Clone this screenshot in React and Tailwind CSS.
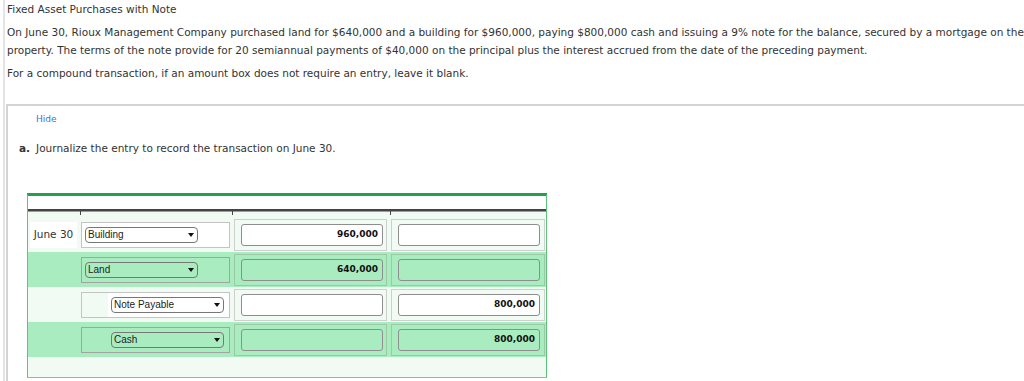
const rows = [
  { date: 'June 30', account: 'Building', debit: '960,000', credit: '', green: false, indent: false },
  { date: '', account: 'Land', debit: '640,000', credit: '', green: true, indent: false },
  { date: '', account: 'Note Payable', debit: '', credit: '800,000', green: false, indent: true },
  { date: '', account: 'Cash', debit: '', credit: '800,000', green: true, indent: true },
];

const Caret = () => (
  <svg width="6" height="4" viewBox="0 0 6 4" className="shrink-0">
    <polygon points="0,0 6,0 3,4" fill="#111" />
  </svg>
);

const AmountBox = ({ value, green, first }) => (
  <div
    className={`h-[32px] border flex items-center pl-[6px] ${first ? 'ml-[2px] w-[153px]' : 'ml-[1px] w-[154px]'} ${
      green ? 'border-[#9cc8a6]' : 'border-[#cfcfcf]'
    }`}
  >
    <div
      className={`h-[22px] w-[142px] rounded-[3px] border border-[#8e8e8e] flex items-center justify-end pr-[4px] font-['DejaVu_Sans',sans-serif] text-[9px] font-bold text-[#111] ${
        green ? 'bg-[#a8ecbf]' : 'bg-white'
      }`}
    >
      {value}
    </div>
  </div>
);

const JournalRow = ({ row }) => (
  <div
    className={`grid grid-cols-[52px_152px_158px_156px] h-[35px] items-center ${
      row.green ? 'bg-[#a8ecbf]' : ''
    }`}
  >
    <div className="flex">
      {row.date && (
        <div className="ml-[2px] w-[47px] h-[26px] bg-white flex items-center justify-center text-[10.5px] text-[#333]">
          {row.date}
        </div>
      )}
    </div>
    <div
      className={`ml-[1px] w-[149px] h-[26px] border flex ${
        row.green ? 'border-[#a3a3a3]' : 'border-[#c4c4c4]'
      }`}
    >
      <div
        className={`flex-1 flex items-center pl-[3px] ${row.indent ? 'ml-[26px]' : ''} ${
          row.green ? '' : 'bg-white'
        }`}
      >
        <div className="w-[113px] h-[16px] rounded-[4px] border border-[#777] flex items-center justify-between pl-[2px] pr-[3px] font-['Liberation_Sans',sans-serif] text-[10px] text-[#222] leading-none">
          <span>{row.account}</span>
          <Caret />
        </div>
      </div>
    </div>
    <AmountBox value={row.debit} green={row.green} first />
    <AmountBox value={row.credit} green={row.green} />
  </div>
);

export default function App() {
  return (
    <div className="h-[381px] overflow-hidden bg-white font-['DejaVu_Sans',sans-serif] text-[#333]">
      <div className="ml-[3px] h-full border-l-2 border-[#e4e4e4] flex flex-col">
        <div className="pl-[2px] mr-[-6px] text-[10.5px] leading-[18px]">
          <p>Fixed Asset Purchases with Note</p>
          <p className="mt-[5px]">
            On June 30, Rioux Management Company purchased land for $640,000 and a building for $960,000, paying
            $800,000 cash and issuing a 9% note for the balance, secured by a mortgage on the property. The terms of
            the note provide for 20 semiannual payments of $40,000 on the principal plus the interest accrued from the
            date of the preceding payment.
          </p>
          <p className="mt-[5px]">For a compound transaction, if an amount box does not require an entry, leave it blank.</p>
        </div>

        <div className="mt-[22px] ml-[1px] flex-1 border-t-2 border-l-2 border-[#d4d4d4]">
          <div className="pt-[6px] pl-[28px] text-[9px] leading-[14px] text-[#3a72d0]">Hide</div>
          <div className="mt-[13px] pl-[11px] text-[10.5px] leading-[18px]">
            <span className="font-bold">a.</span>
            <span className="ml-[6px]">Journalize the entry to record the transaction on June 30.</span>
          </div>

          <div className="mt-[36px] ml-[19px] w-[520px] border-t-[3px] border-t-[#22a14a] border-x border-b border-x-[#5cc47a] border-b-[#72cf8c]">
            <div className="h-[13px] bg-white" />
            <div className="grid grid-cols-[52px_152px_158px_156px] h-[6px] bg-[#f1faf3]">
              {[0, 1, 2, 3].map((i) => (
                <div key={i} className={`h-full ${i > 0 ? 'border-l border-[#444]' : ''}`}>
                  <div className="h-[3px] border-t-2 border-[#444] border-b border-b-[#9a9a9a]" />
                </div>
              ))}
            </div>
            <div className="bg-[#f1faf3] pt-[2px] pb-[20px]">
              {rows.map((row, i) => (
                <JournalRow key={i} row={row} />
              ))}
            </div>
          </div>
        </div>
      </div>
    </div>
  );
}
